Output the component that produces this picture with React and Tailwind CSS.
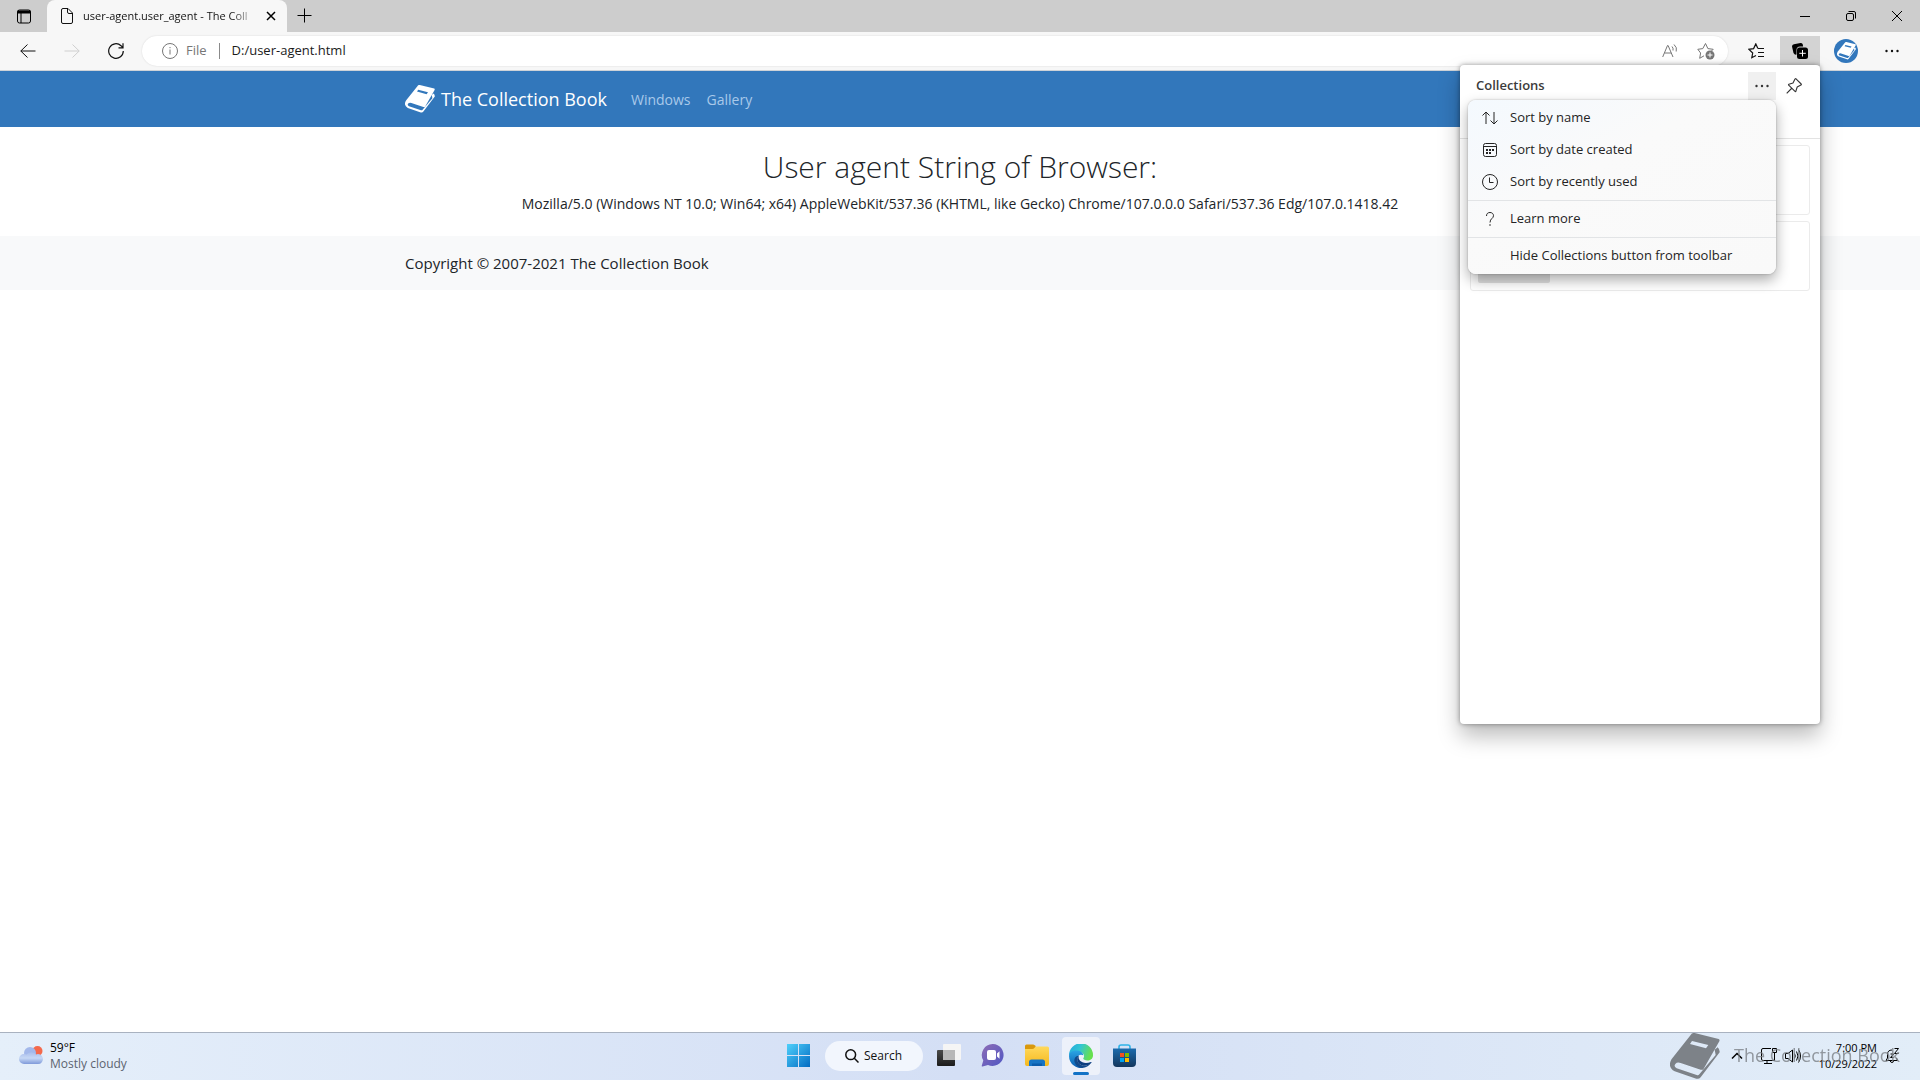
import { useState } from 'react';

const menuGroups = [
  [
    { id: 'name', label: 'Sort by name', icon: SortIcon },
    { id: 'date', label: 'Sort by date created', icon: CalendarIcon },
    { id: 'recent', label: 'Sort by recently used', icon: ClockIcon },
  ],
  [{ id: 'learn', label: 'Learn more', icon: QuestionIcon }],
  [{ id: 'hide', label: 'Hide Collections button from toolbar' }],
];

function BookIcon({ className }) {
  return (
    <svg className={className} viewBox="0 0 150 138" fill="none" aria-hidden="true">
      <path
        fill="currentColor"
        fillRule="evenodd"
        d="M74 0 L146 18 Q150 20 148 25 L101 107 Q98 112 92 110 L32 90 Q22 86 16 93 Q10 101 20 106 L80 126 Q85 128 88 124 L137 66 L134 50 L143 43 Q150 50 149 58 L92 133 Q87 139 79 137 L14 115 Q-6 104 2 84 Q4 78 8 74 L62 6 Q66 -1 74 0Z M66 24 L60 33 L108 46 L115 36Z"
      />
    </svg>
  );
}

function SortIcon() {
  return (
    <svg className="h-4 w-4" viewBox="0 0 16 16" fill="none" stroke="currentColor" aria-hidden="true">
      <path d="M4 14V2M.5 5.500 4 2l3.500 3.500M12 2v12M8.500 10.500 12 14l3.500-3.500" />
    </svg>
  );
}

function CalendarIcon() {
  return (
    <svg className="h-4 w-4" viewBox="0 0 16 16" fill="none" stroke="currentColor" aria-hidden="true">
      <rect x="1.500" y="1.500" width="13" height="13" rx="2" />
      <path d="M1.500 4.500h13" />
      <g fill="currentColor" stroke="none">
        <rect x="7" y="7" width="2" height="2" />
        <rect x="10" y="7" width="2" height="2" />
        <rect x="4" y="7" width="2" height="2" />
        <rect x="4" y="10" width="2" height="2" />
        <rect x="7" y="10" width="2" height="2" />
      </g>
    </svg>
  );
}

function ClockIcon() {
  return (
    <svg className="h-4 w-4" viewBox="0 0 16 16" fill="none" stroke="currentColor" aria-hidden="true">
      <circle cx="8" cy="8" r="7.500" />
      <path d="M7.500 3.500v5h4" />
    </svg>
  );
}

function QuestionIcon() {
  return (
    <svg className="h-4 w-4" viewBox="0 0 16 16" fill="none" stroke="currentColor" aria-hidden="true">
      <path d="M4.500 5C4.500 2.500 6 1.500 8 1.500s3.500 1.300 3.500 3.200C11.500 7.500 8 7.500 8 11.500" />
      <circle cx="8" cy="14" r=".8" fill="currentColor" stroke="none" />
    </svg>
  );
}

function DotsIcon() {
  return (
    <svg className="h-4 w-4" viewBox="0 0 16 16" fill="currentColor" aria-hidden="true">
      <circle cx="2.500" cy="8" r="1.200" />
      <circle cx="8" cy="8" r="1.200" />
      <circle cx="13.500" cy="8" r="1.200" />
    </svg>
  );
}

function IconButton({ label, className, children, ...props }) {
  return (
    <button
      type="button"
      aria-label={label}
      className={`flex flex-shrink-0 items-center justify-center ${className}`}
      {...props}
    >
      {children}
    </button>
  );
}

function TabBar() {
  return (
    <div className="flex h-8 bg-[#cdcdcd]">
      <IconButton label="Tab actions" className="w-[47px] text-black">
        <svg className="h-4 w-4" viewBox="0 0 16 16" fill="none" stroke="currentColor">
          <rect x="1.500" y="2" width="13" height="13" rx="2" />
          <path d="M1.500 4h13" strokeWidth="3" />
          <path d="M5 5v10" />
        </svg>
      </IconButton>
      <div className="flex w-60 items-center rounded-t-lg bg-[#f7f7f7] pr-2 pl-3">
        <svg className="h-4 w-4 flex-shrink-0" viewBox="0 0 16 16" fill="none" stroke="#111">
          <path d="M2.500 2A1.500 1.500 0 0 1 4 .5h5L13.500 5v9a1.500 1.500 0 0 1-1.500 1.500H4A1.500 1.500 0 0 1 2.500 14ZM8.500 .5V4A1.500 1.500 0 0 0 10 5.500h3.500" />
        </svg>
        <span className="ml-2 w-[174px] flex-shrink-0 bg-gradient-to-r from-[#111] from-85% to-transparent bg-clip-text text-[11px] whitespace-nowrap text-transparent">
          user-agent.user_agent - The Coll
        </span>
        <IconButton label="Close tab" className="ml-1 h-5 w-5 text-black">
          <svg className="h-4 w-4" viewBox="0 0 16 16" fill="none" stroke="currentColor" strokeWidth="1.500">
            <path d="m4 4 8 8M12 4l-8 8" />
          </svg>
        </IconButton>
      </div>
      <IconButton label="New tab" className="w-9 text-black">
        <svg className="h-4 w-4" viewBox="0 0 16 16" fill="none" stroke="currentColor">
          <path d="M.5 7.500h14M7.500 .5v14" />
        </svg>
      </IconButton>
      <div className="ml-auto flex text-black">
        <IconButton label="Minimize" className="w-[46px]">
          <svg className="h-4 w-4" viewBox="0 0 16 16" fill="none" stroke="currentColor">
            <path d="M3 8.500h10" />
          </svg>
        </IconButton>
        <IconButton label="Restore" className="w-[46px]">
          <svg className="h-4 w-4" viewBox="0 0 16 16" fill="none" stroke="currentColor">
            <rect x="3.500" y="5.500" width="7" height="7" rx="1.500" />
            <path d="M5.500 3.500H11A1.500 1.500 0 0 1 12.500 5v5.500" />
          </svg>
        </IconButton>
        <IconButton label="Close" className="w-[46px]">
          <svg className="h-4 w-4" viewBox="0 0 16 16" fill="none" stroke="currentColor">
            <path d="m3 3 10 10M13 3 3 13" />
          </svg>
        </IconButton>
      </div>
    </div>
  );
}

function AddressBar() {
  return (
    <div className="flex h-[30px] flex-1 items-center rounded-full bg-white pr-1 pl-5 shadow-[0_0_2px_#0002]">
      <svg className="h-4 w-4 flex-shrink-0 text-[#767676]" viewBox="0 0 16 16" fill="none" stroke="currentColor">
        <circle cx="8" cy="8" r="7.500" />
        <path d="M8 6.500v5M8 4v1.200" />
      </svg>
      <span className="ml-2 text-[13px] text-[#767676]">File</span>
      <span className="ml-3 h-4 w-px bg-[#8a8a8a]" />
      <input
        type="text"
        aria-label="Address"
        defaultValue="D:/user-agent.html"
        className="ml-3 min-w-0 flex-1 text-[13px] text-[#1b1b1b] outline-none"
      />
      <IconButton label="Read aloud" className="h-7 w-9 text-[#767676]">
        <svg className="h-4 w-4" viewBox="0 0 16 16" fill="none" stroke="currentColor">
          <path d="M.7 14 5.500 2.500h.6L11 14M2.500 10h6.700M10 3.500q1.500 1.500 1 4M12 1.500q3.500 3 2.200 7" />
        </svg>
      </IconButton>
      <IconButton label="Add to favorites" className="h-7 w-9 text-[#767676]">
        <svg className="h-[18px] w-[18px]" viewBox="0 0 18 18" fill="none" stroke="currentColor">
          <path d="m7 13.800-4.300 2.500.9-5.300L.8 7.300l5-.7L8.500 1.500l2.400 5.100 5.300.7-2 2" />
          <circle cx="13" cy="13" r="4.500" fill="currentColor" stroke="none" />
          <path d="M13 10.500v5M10.500 13h5" stroke="#fff" />
        </svg>
      </IconButton>
    </div>
  );
}

function SortMenu() {
  return (
    <div
      role="menu"
      className="absolute top-full right-0 w-[308px] divide-y divide-[#e2e4e6] rounded-lg bg-linear-to-br from-[#f4f9fe] via-[#fafafa] via-40% to-[#f9f9f9] shadow-[0_6px_14px_#0005,0_0_2px_#0004]"
    >
      {menuGroups.map((group) => (
        <div key={group[0].id} className="py-[2px]">
          {group.map(({ id, label, icon: Icon }) => (
            <button
              key={id}
              type="button"
              role="menuitem"
              className="flex h-8 w-full items-center gap-3 px-[14px] text-left text-[13px] text-[#242424]"
            >
              <span className="w-4">{Icon && <Icon />}</span>
              {label}
            </button>
          ))}
        </div>
      ))}
    </div>
  );
}

function CollectionsPanel() {
  const [menuOpen, setMenuOpen] = useState(true);

  return (
    <section
      aria-label="Collections"
      className="absolute top-[29px] right-0 z-20 h-[659px] w-[360px] rounded-[4px] bg-white shadow-[0_12px_22px_#0004,0_0_5px_#0006]"
    >
      <div className="flex items-center pt-[7px] pr-3 pl-4">
        <h2 className="text-[13px] font-semibold text-[#3b3b3b]">Collections</h2>
        <div className="relative ml-auto">
          <IconButton
            label="More options"
            className="h-7 w-7 bg-[#f0f0f0] text-[#333]"
            onClick={() => setMenuOpen(!menuOpen)}
          >
            <DotsIcon />
          </IconButton>
          {menuOpen && <SortMenu />}
        </div>
        <IconButton label="Pin Collections" className="ml-1 h-7 w-7 text-[#333]">
          <svg className="h-4 w-4" viewBox="0 0 16 16" fill="none" stroke="currentColor" strokeWidth="1.100" strokeLinejoin="round">
            <path d="m10 .8 5.200 5.200q.5.700-.3 1.100L11.200 9l-1.300 4.200q-.3.700-.9.200L2.700 7.100q-.5-.6.200-.9L7 4.900 9 1.100q.4-.7 1-.3ZM5.500 10.500.7 15.300" />
          </svg>
        </IconButton>
      </div>
      <div className="mt-[38px] border-t border-[#e3e3e3] px-[10px] pt-[6px]">
        <div className="h-[70px] rounded-[3px] border border-[#ebebeb]" />
        <div className="mt-[6px] flex h-[70px] items-end rounded-[3px] border border-[#ebebeb] px-[7px] pb-[7px]">
          <span className="h-14 w-[72px] rounded-[2px] bg-[#e0e0e0]" />
        </div>
      </div>
    </section>
  );
}

function Toolbar() {
  return (
    <div className="flex h-[39px] items-center border-b border-[#cfd3d8] bg-[#f7f7f7] pr-2 pl-[10px]">
      <IconButton label="Back" className="h-8 w-9 text-[#111]">
        <svg className="h-4 w-4" viewBox="0 0 16 16" fill="none" stroke="currentColor">
          <path d="M15.500 8H.8M7.500 1.500 .8 8l6.700 6.500" />
        </svg>
      </IconButton>
      <IconButton label="Forward" className="ml-2 h-8 w-9 text-[#cfcfcf]">
        <svg className="h-4 w-4" viewBox="0 0 16 16" fill="none" stroke="currentColor">
          <path d="M.5 8h14.700M8.500 1.500 15.200 8l-6.700 6.500" />
        </svg>
      </IconButton>
      <IconButton label="Refresh" className="ml-2 h-8 w-9 text-[#111]">
        <svg className="h-4 w-4" viewBox="0 0 16 16" fill="none" stroke="currentColor" strokeWidth="1.200">
          <path d="M15.300 8A7.300 7.300 0 1 1 13 2.700L14.800 4.500M15 .3v4.500h-4.500" />
        </svg>
      </IconButton>
      <div className="ml-2 flex flex-1">
        <AddressBar />
      </div>
      <IconButton label="Favorites" className="ml-2 h-[30px] w-10 text-[#111]">
        <svg className="h-4 w-4" viewBox="0 0 16 16" fill="none" stroke="currentColor" strokeWidth="1.200">
          <path d="m8 12.500-4.200 2.200.9-4.700L.8 6.300l4.800-.7L7.800.9l2.100 4.600M10 5.500h6M10 9.500h6M10 13.500h6" />
        </svg>
      </IconButton>
      <div className="relative ml-1 flex-shrink-0">
        <IconButton label="Collections" className="h-[30px] w-10 bg-[#d3d3d3] text-black">
          <svg className="h-4 w-4" viewBox="0 0 16 16" fill="currentColor">
            <path d="M0 3.500Q0 1.600 1.900 1.300L8.500.1q1.900-.3 2.300 1.500l.3 1.900H8Q4.500 3.500 4.500 7v4.600Q2.500 12 1.500 10Z" />
            <rect x="5" y="4.500" width="11" height="11.500" rx="2.500" />
            <path d="M10.500 7v6.500M7.300 10.300h6.500" stroke="#fff" />
          </svg>
        </IconButton>
        <CollectionsPanel />
      </div>
      <IconButton label="Profile" className="ml-[6px] h-[30px] w-10">
        <span className="flex h-6 w-6 items-center justify-center rounded-full bg-[#3277bc] text-white">
          <BookIcon className="w-[19px]" />
        </span>
      </IconButton>
      <IconButton label="Settings and more" className="ml-[6px] h-[30px] w-10 text-[#111]">
        <DotsIcon />
      </IconButton>
    </div>
  );
}

function PageContent() {
  return (
    <div className="flex-1 bg-white text-[#212529]">
      <header className="bg-[#3277bb]">
        <nav className="mx-auto flex h-14 max-w-[1110px] items-center">
          <a href="#home" className="flex items-center gap-[6px] text-[18px] text-white">
            <BookIcon className="w-[30px]" />
            The Collection Book
          </a>
          <a href="#windows" className="ml-6 text-[14px] text-[#a9c9ea]">Windows</a>
          <a href="#gallery" className="ml-4 text-[14px] text-[#a9c9ea]">Gallery</a>
        </nav>
      </header>
      <main className="pt-5 pb-5 text-center">
        <h1 className="text-[30px] leading-10 font-light">User agent String of Browser:</h1>
        <p className="mt-[5px] text-[14px] leading-6">
          Mozilla/5.0 (Windows NT 10.0; Win64; x64) AppleWebKit/537.36 (KHTML, like Gecko) Chrome/107.0.0.0
          Safari/537.36 Edg/107.0.1418.42
        </p>
      </main>
      <footer className="bg-[#f8f9fa] py-[15px]">
        <p className="mx-auto max-w-[1110px] text-[15px] leading-6">Copyright © 2007-2021 The Collection Book</p>
      </footer>
    </div>
  );
}

function WeatherIcon() {
  return (
    <svg className="h-6 w-6" viewBox="0 0 24 24" aria-hidden="true">
      <defs>
        <linearGradient id="cloud" x1="0" y1="0" x2="0" y2="1">
          <stop offset="0" stopColor="#a9bdeb" />
          <stop offset="0.500" stopColor="#c6d8f5" />
          <stop offset="1" stopColor="#7f9ada" />
        </linearGradient>
      </defs>
      <circle cx="18.500" cy="7" r="5" fill="#f4694b" />
      <circle cx="11" cy="9" r="6" fill="#a3b8ea" />
      <path d="M5 20a5 5 0 0 1 0-10q1.500 0 2.500.6a6 6 0 0 1 9.500-.2 5 5 0 1 1 2 9.600Z" fill="url(#cloud)" />
    </svg>
  );
}

function StartIcon() {
  return (
    <svg className="h-6 w-6" viewBox="0 0 24 24" aria-hidden="true">
      <defs>
        <linearGradient id="start" x1="0" y1="0" x2="24" y2="24" gradientUnits="userSpaceOnUse">
          <stop stopColor="#4fd0fb" />
          <stop offset="1" stopColor="#0067c0" />
        </linearGradient>
      </defs>
      <path d="M0 0h11v11H0ZM12 0h11v11H12ZM0 12h11v11H0ZM12 12h11v11H12Z" fill="url(#start)" />
    </svg>
  );
}

function TaskViewIcon() {
  return (
    <svg className="h-6 w-6" viewBox="0 0 24 24" aria-hidden="true">
      <defs>
        <linearGradient id="dark" x1="0" y1="0" x2="0" y2="1">
          <stop stopColor="#4a4a4a" />
          <stop offset="1" stopColor="#1b1b1b" />
        </linearGradient>
      </defs>
      <rect x="6" width="18" height="16" rx="1" fill="#f5f5f5" />
      <rect y="6" width="18" height="16" rx="1" fill="url(#dark)" />
      <rect x="6" y="6" width="12" height="10" fill="#b8b8b8" />
    </svg>
  );
}

function ChatIcon() {
  return (
    <svg className="h-6 w-6" viewBox="0 0 24 24" aria-hidden="true">
      <defs>
        <linearGradient id="chat" x1="0" y1="0" x2="1" y2="1">
          <stop stopColor="#8e6cb5" />
          <stop offset="1" stopColor="#4f57c4" />
        </linearGradient>
      </defs>
      <path d="M12 0A11 11 0 1 1 7 21L1.500 22.500Q.5 22.600.8 21.600L2.300 16.500A11 11 0 0 1 12 0Z" fill="url(#chat)" />
      <rect x="6" y="6" width="9" height="10" rx="2" fill="#fff" />
      <path d="m16 9.500 2.500-2.200v7.400L16 12.500Z" fill="#fff" />
    </svg>
  );
}

function ExplorerIcon() {
  return (
    <svg className="h-6 w-6" viewBox="0 0 24 24" aria-hidden="true">
      <defs>
        <linearGradient id="folder" x1="0" y1="0" x2="0" y2="1">
          <stop stopColor="#ffd95c" />
          <stop offset="1" stopColor="#f5b81e" />
        </linearGradient>
      </defs>
      <path d="M0 2Q0 .5 1.500 .5H8q1 0 1.700.8L11 3 9 5.500H0Z" fill="#d9980d" />
      <path d="M0 5h7.500q1 0 1.700-.8l.8-1q.5-.7 1.500-.7H22.500Q24 2.500 24 4v16q0 2-2 2H2q-2 0-2-2Z" fill="url(#folder)" />
      <path d="M4 22v-4q0-2.500 2.500-2.500h11Q20 15.500 20 18v4Z" fill="#1674c4" />
      <path d="M7 19.500h10V22H7Z" fill="#0b5cab" />
    </svg>
  );
}

function EdgeIcon() {
  return (
    <svg className="h-6 w-6" viewBox="0 0 24 24" aria-hidden="true">
      <defs>
        <linearGradient id="edge-top" x1="0" y1="0" x2="1" y2="0.300">
          <stop stopColor="#23a8e0" />
          <stop offset="0.500" stopColor="#33c6d2" />
          <stop offset="1" stopColor="#67e04f" />
        </linearGradient>
        <linearGradient id="edge-left" x1="0" y1="0" x2="0" y2="1">
          <stop stopColor="#2ba6e4" />
          <stop offset="1" stopColor="#0a5cb0" />
        </linearGradient>
      </defs>
      <path d="M0 11.500A12 12 0 0 1 24 11c.2 3.600-2.500 5.500-5.500 5.500s-5-1.300-4-2.600c1.400-1.800.5-5.900-4.500-6C5.500 7.800 1 9.500 0 11.500Z" fill="url(#edge-top)" />
      <path d="M0 12C.3 8 4 5.800 8.500 6.600c2.700.4 5.500 2 5.800 4.600C11 9.500 8 12 8 15c0 4 3.500 7.500 6.500 8.700A12 12 0 0 1 0 12Z" fill="url(#edge-left)" />
      <path d="M9.800 11.800C7 14 8 20.500 13.500 21.500c3.500.6 6.800-.5 8.700-2.700A12 12 0 0 1 13 24C7.500 23 4.500 18.500 5.500 15c.7-2 2.300-3.200 4.300-3.200Z" fill="#114a8b" />
      <path d="M9.800 11.800c-1.300 4.700 4 9.200 12.200 6.200.6-.2.800.2.400.7-2 2.300-5.400 3.500-8.900 2.800C8 20.500 6.800 14 9.800 11.800Z" fill="#0d3f80" />
    </svg>
  );
}

function StoreIcon() {
  return (
    <svg className="h-6 w-6" viewBox="0 0 24 24" aria-hidden="true">
      <defs>
        <linearGradient id="store" x1="0" y1="0" x2="0" y2="1">
          <stop stopColor="#1c6bad" />
          <stop offset="1" stopColor="#13365c" />
        </linearGradient>
      </defs>
      <path d="M6 5.500V3q0-2 2-2h7q2 0 2 2v2.500" fill="none" stroke="#2fb3e8" strokeWidth="1.600" />
      <path d="M0 4.500h23V19q0 4-4 4H4q-4 0-4-4Z" fill="url(#store)" />
      <path d="M7 9h4v4H7Z" fill="#f25022" />
      <path d="M12 9h4v4h-4Z" fill="#7fba00" />
      <path d="M7 14h4v4H7Z" fill="#00a4ef" />
      <path d="M12 14h4v4h-4Z" fill="#ffb900" />
    </svg>
  );
}

function Tray() {
  return (
    <div className="relative flex items-center justify-end text-black">
      <div className="pointer-events-none absolute top-0 right-1 flex h-full items-center gap-[14px] text-[#7d8288]">
        <BookIcon className="w-[50px]" />
        <span className="text-[18px] whitespace-nowrap opacity-80">The Collection Book</span>
      </div>
      <IconButton label="Show hidden icons" className="h-10 w-8">
        <svg className="h-4 w-4" viewBox="0 0 16 16" fill="none" stroke="currentColor" strokeWidth="1.500">
          <path d="m3 10.500 5-5 5 5" />
        </svg>
      </IconButton>
      <IconButton label="Network" className="ml-1 h-10 w-6">
        <svg className="h-4 w-4" viewBox="0 0 16 16" fill="none" stroke="currentColor">
          <path d="M10 .5H2Q.5.500.5 2v9Q.5 12.500 2 12.500h9.500M6 12.500v3M3 15.500h8M11.500 .5h4v4h-4ZM13.500 4.500v8h-2" />
        </svg>
      </IconButton>
      <IconButton label="Volume" className="h-10 w-6">
        <svg className="h-4 w-4" viewBox="0 0 16 16" fill="none" stroke="currentColor">
          <path d="M.5 5.500H3L7.500 2v12L3 10.500H.5ZM9.500 5.500q1.500 2.500 0 5M11.500 3.500q3 4.500 0 9M13.500 1.500q4 6.500 0 13" />
        </svg>
      </IconButton>
      <time className="ml-[10px] w-[62px] text-right text-[11px] leading-4 whitespace-nowrap">
        7:00 PM
        <br />
        10/29/2022
      </time>
      <IconButton label="Notifications" className="ml-[3px] h-10 w-6">
        <svg className="h-4 w-4" viewBox="0 0 16 16" fill="none" stroke="currentColor">
          <path d="M8 2Q3.500 2 3.500 6.500V10L2 12.500h11.500L12.500 10M6 12.500Q6.500 14.500 8 14.500t2-2M6.500 6h3L6.500 9.500h3M10.500.500h4l-4 5h4" />
        </svg>
      </IconButton>
    </div>
  );
}

function Taskbar() {
  return (
    <footer className="grid h-12 grid-cols-[1fr_auto_1fr] border-t border-[#a9b2c0] bg-linear-to-r from-[#e5effa] via-[#d4dff5] to-[#e2edf8] pr-4 pb-[2px] pl-[19px]">
      <button type="button" className="flex items-center gap-[7px] text-left text-[12px] leading-4">
        <WeatherIcon />
        <span>
          <span className="block text-black">59°F</span>
          <span className="block text-[#5c6470]">Mostly cloudy</span>
        </span>
      </button>
      <div className="flex items-center">
        <IconButton label="Start" className="h-10 w-11">
          <StartIcon />
        </IconButton>
        <button
          type="button"
          className="mr-1 ml-1 flex h-[30px] w-[98px] items-center justify-center gap-[5px] rounded-full bg-[#f2f6fd] text-[12px] text-[#111]"
        >
          <svg className="h-[14px] w-[14px]" viewBox="0 0 14 14" fill="none" stroke="currentColor" strokeWidth="1.500">
            <circle cx="5.700" cy="5.700" r="4.900" />
            <path d="m9.300 9.300 4.200 4.200" />
          </svg>
          Search
        </button>
        <IconButton label="Task view" className="h-10 w-11">
          <TaskViewIcon />
        </IconButton>
        <IconButton label="Chat" className="h-10 w-11">
          <ChatIcon />
        </IconButton>
        <IconButton label="File Explorer" className="h-10 w-11">
          <ExplorerIcon />
        </IconButton>
        <IconButton label="Microsoft Edge" className="relative mx-[3px] h-[38px] w-[38px] rounded-[4px] bg-[#edf1fa]">
          <EdgeIcon />
          <span className="absolute bottom-0 h-[3px] w-4 rounded-full bg-[#1272c6]" />
        </IconButton>
        <IconButton label="Microsoft Store" className="h-10 w-11">
          <StoreIcon />
        </IconButton>
      </div>
      <Tray />
    </footer>
  );
}

function App() {
  return (
    <div className="flex min-h-screen flex-col font-['Open_Sans',sans-serif]">
      <TabBar />
      <Toolbar />
      <PageContent />
      <Taskbar />
    </div>
  );
}

export default App;
